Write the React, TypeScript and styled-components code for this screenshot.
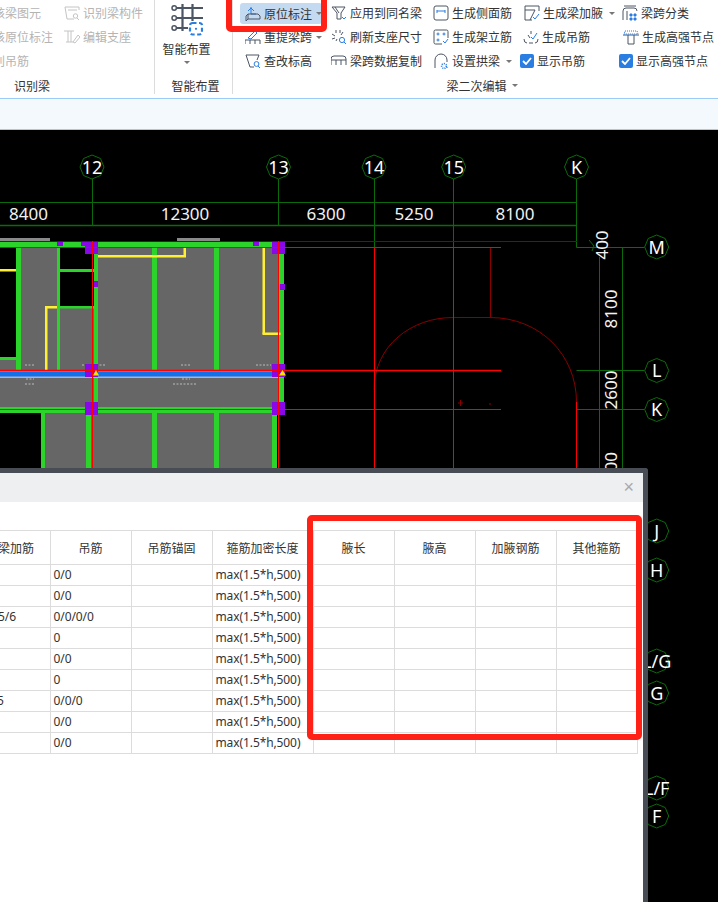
import React from 'react';
import styled, { createGlobalStyle } from 'styled-components';

const CJK = '"Noto Sans CJK SC", "Noto Sans", sans-serif';
const GREEN = '#0b6b0b';
const WALL = '#2bd32b';
const SLATE = '#4c5563';
const BLUE = '#2a7de1';

const GlobalStyle = createGlobalStyle`
  html, body {
    margin: 0;
    padding: 0;
    background: #fff;
  }
`;

const Page = styled.div`
  position: relative;
  width: 718px;
  height: 902px;
  overflow: hidden;
  font-family: ${CJK};
  font-size: 12px;
  color: #333;
`;

const Ribbon = styled.div`
  display: flex;
  height: 98px;
  overflow: hidden;
  background: #fff;
  box-sizing: border-box;
`;

const Group = styled.div<{ $width: number; $shift?: number; $last?: boolean }>`
  flex: none;
  width: ${(p) => p.$width}px;
  margin-left: ${(p) => p.$shift ?? 0}px;
  height: 94px;
  box-sizing: border-box;
  border-right: ${(p) => (p.$last ? 'none' : '1px solid #dcdcdc')};
`;

const Rows = styled.div<{ $columns: string; $pad?: number }>`
  display: grid;
  grid-template-columns: ${(p) => p.$columns};
  grid-auto-rows: 24px;
  height: 72px;
  padding: 1px 0 0 ${(p) => p.$pad ?? 0}px;
`;

const Item = styled.div<{ $off?: boolean; $indent?: number }>`
  display: flex;
  align-items: center;
  gap: 3px;
  padding-left: ${(p) => p.$indent ?? 0}px;
  white-space: nowrap;
  line-height: 16px;
  color: ${(p) => (p.$off ? '#b4b4b4' : '#333')};
`;

const ActiveItem = styled(Item)`
  width: 82px;
  height: 21px;
  margin: 2px 0 0;
  padding-left: 5px;
  box-sizing: border-box;
  background: #c3daf0;
  border-radius: 3px;
`;

const Caret = styled.span<{ $gap?: number }>`
  display: inline-block;
  margin-left: ${(p) => p.$gap ?? 1}px;
  border-style: solid;
  border-width: 3px 3px 0;
  border-color: #777 transparent transparent;
`;

const GroupLabel = styled.div<{ $left?: number; $center?: boolean }>`
  display: flex;
  align-items: center;
  justify-content: ${(p) => (p.$center ? 'center' : 'flex-start')};
  height: 20px;
  margin-top: 2px;
  padding-left: ${(p) => p.$left ?? 0}px;
  gap: 4px;
  white-space: nowrap;
`;

const BigTool = styled.div`
  display: flex;
  flex-direction: column;
  align-items: center;
  height: 73px;
  padding: 3px 14px 0 0;
  box-sizing: border-box;
  line-height: 16px;
`;

const BigToolText = styled.div`
  margin-top: 5px;
  height: 17px;
`;

const BigToolCaret = styled(Caret)`
  margin: 3px 0 0;
`;

const CheckBox = styled.span`
  display: flex;
  align-items: center;
  justify-content: center;
  flex: none;
  width: 14px;
  height: 14px;
  border-radius: 2px;
  background: ${BLUE};
`;

const Strip = styled.div`
  height: 30px;
  background: #f3f9fd;
  border-top: 1px solid #9ccbf7;
  border-bottom: 1px solid #9ccbf7;
`;

const Canvas = styled.div`
  position: relative;
  height: 772px;
  background: #000;
  overflow: hidden;
`;

const Drawing = styled.svg`
  display: block;
`;

const Dialog = styled.div`
  position: absolute;
  left: 0;
  top: 338px;
  bottom: 0;
  width: 648px;
  box-sizing: border-box;
  background: #fff;
  border-top: 5px solid #474c55;
  border-right: 5px solid #474c55;
  border-top-right-radius: 3px;
  overflow: hidden;
`;

const DialogTitle = styled.div`
  display: flex;
  align-items: center;
  justify-content: flex-end;
  height: 29px;
  padding-right: 9px;
  background: #eeeff1;
  color: #a8a8a8;
  font-family: "Liberation Sans", sans-serif;
  font-size: 18px;
`;

const Table = styled.table`
  margin: 28px 0 0 -1px;
  width: 638px;
  table-layout: fixed;
  border-collapse: collapse;
  font-size: 12px;
  color: #333;
`;

const Head = styled.th`
  height: 33px;
  padding: 0;
  font-weight: 400;
  text-align: center;
  white-space: nowrap;
  overflow: hidden;
  border: 1px solid #dcdcdc;
  border-left: none;

  &:first-child {
    text-align: left;
    text-indent: -1px;
  }
`;

const Cell = styled.td<{ $indent?: number }>`
  height: 20px;
  padding: 0 0 0 3px;
  font-family: "Noto Sans", sans-serif;
  letter-spacing: -0.1px;
  line-height: 20px;
  white-space: nowrap;
  overflow: hidden;
  border: 1px solid #dcdcdc;
  border-left: none;

  &:first-child {
    padding-left: 0;
    text-indent: ${(p) => p.$indent ?? 0}px;
  }
`;

const Highlight = styled.div`
  position: absolute;
  box-sizing: border-box;
  border: 6px solid #ff2016;
  border-radius: 5px;
  pointer-events: none;
`;

const ToolHighlight = styled(Highlight)`
  left: 226px;
  top: -8px;
  width: 101px;
  height: 40px;
`;

const TableHighlight = styled(Highlight)`
  left: 307px;
  top: 42px;
  width: 335px;
  height: 225px;
`;

const Ico = ({ children }: { children: React.ReactNode }) => (
  <svg width="16" height="16" viewBox="0 0 16 16" fill="none" stroke={SLATE} strokeWidth="1" style={{ flex: 'none' }}>
    {children}
  </svg>
);

const ico: Record<string, React.ReactNode> = {
  recognize: (
    <g stroke="#c4c4c4">
      <path d="M1 2h14v3M1 2l2 12h7M4 5h9" />
      <circle cx="11.5" cy="11" r="2.2" />
      <path d="M13 13l2 2" />
    </g>
  ),
  support: (
    <g stroke="#c4c4c4">
      <path d="M0 2h10M4 2v11M7 2v11M2 13h7" />
      <path d="M9 13l5-7 2 2-5 6z" />
    </g>
  ),
  inplace: (
    <>
      <path d="M6 1v7h5" stroke={BLUE} />
      <path d="M3 5l3-3 3 3" stroke={BLUE} />
      <path d="M1 15v-5l2-2h10l2 2v3H3l-2 2zM3 8v5" />
    </>
  ),
  respan: (
    <>
      <path d="M3 9l7-7 2 2-6 6z" stroke={BLUE} />
      <path d="M0 15v-4h15v4M5 11v4M10 11v4" />
    </>
  ),
  level: (
    <>
      <path d="M1 2h13l-2 5M1 2l4 12h4" />
      <circle cx="11.5" cy="11" r="2.4" stroke={BLUE} />
      <path d="M13 13l2 2" stroke={BLUE} />
    </>
  ),
  apply: (
    <>
      <path d="M1 2h13l-4 6v6H6V8z" />
      <path d="M4 2l4 6" />
      <path d="M11 12l2 2 2-2" stroke={BLUE} />
    </>
  ),
  refresh: (
    <>
      <path d="M5 1v3M9 1v3M1 5l3 2M1 10l3-1M12 3l-2 3M5 12l1-2" />
      <circle cx="11" cy="11" r="2.6" stroke={BLUE} />
      <path d="M13 13l2 2" stroke={BLUE} />
    </>
  ),
  copy: (
    <>
      <path d="M0 12V6q0-3 3-3h9q3 0 3 3v6" />
      <path d="M0 7h15M5 7v5M10 7v5" />
    </>
  ),
  side: (
    <>
      <rect x="1" y="1" width="14" height="14" rx="2" />
      <path d="M4 8V6h8v2M4 6V5M12 6V5" stroke={BLUE} />
    </>
  ),
  erect: (
    <>
      <path d="M9 15H2.5Q1 15 1 13.5v-11Q1 1 2.5 1h11Q15 1 15 2.500V9" />
      <circle cx="5" cy="5" r="1" stroke={BLUE} />
      <circle cx="11" cy="5" r="1" stroke={BLUE} />
      <circle cx="5" cy="11" r="1" stroke={BLUE} />
      <path d="M10 12l2 2 3-4" stroke={BLUE} />
    </>
  ),
  arch: (
    <>
      <path d="M2 15V7a6 6 0 0 1 12 0v2M14 15v-1" />
      <circle cx="11" cy="13" r="2.400" stroke={BLUE} strokeDasharray="1 1" strokeWidth="1.600" />
    </>
  ),
  haunch: (
    <>
      <path d="M8 15H1V1h14v5M1 5h10L6 15" />
      <path d="M9 12l2 2 4-5" stroke={BLUE} />
    </>
  ),
  hanger: (
    <>
      <path d="M1 10q0 4 3 4M15 10q0 4-3 4M6 14h4" />
      <path d="M5 6l2 3M8 2v3" />
      <path d="M8 8l2 2 4-6" stroke={BLUE} />
    </>
  ),
  classify: (
    <>
      <path d="M2 1h12" />
      <path d="M1 15V6q0-3 3-3h8q3 0 3 3" />
      <path d="M5 6v9" />
      <path d="M8 9h2v2H8zM12 9h2v2h-2zM8 13h2v2H8zM12 13h2v2h-2z" stroke={BLUE} fill={BLUE} />
    </>
  ),
  strong: (
    <>
      <path d="M0 6h16M3 6v0M5 6v9h6V6" />
      <path d="M2 2h12l1 3H1z" stroke={BLUE} strokeDasharray="1 1" />
    </>
  ),
};

const Check = () => (
  <CheckBox>
    <svg width="10" height="8" viewBox="0 0 10 8" fill="none" stroke="#fff" strokeWidth="1.800">
      <path d="M1 4l3 3 5-6" />
    </svg>
  </CheckBox>
);

const SmartIcon = () => (
  <svg width="32" height="33" viewBox="0 0 32 33" fill="none">
    <path d="M11.500 1v27M21.500 1v17M6 5h26M6 15h26M6 25h11" stroke={SLATE} strokeWidth="2.200" />
    <circle cx="3.200" cy="5" r="2.200" stroke={SLATE} strokeWidth="1.500" />
    <circle cx="3.200" cy="15" r="2.200" stroke={SLATE} strokeWidth="1.500" />
    <circle cx="3.200" cy="25" r="2.200" stroke={SLATE} strokeWidth="1.500" />
    <rect x="19" y="20" width="12" height="11.500" rx="2.500" stroke={BLUE} strokeWidth="2.200" strokeDasharray="4 2.500" />
    <circle cx="25" cy="25.800" r="1.100" fill={BLUE} />
  </svg>
);

// grid axis bubble, drawn as the low-res octagon the CAD view shows
const Bubble = ({ x, y, label }: { x: number; y: number; label: string }) => {
  const pts = Array.from({ length: 8 }, (_, i) => {
    const a = (i * Math.PI) / 4;
    return `${(x + 12 * Math.cos(a)).toFixed(1)},${(y + 12 * Math.sin(a)).toFixed(1)}`;
  }).join(' ');
  return (
    <g>
      <polygon points={pts} fill="#000" stroke={GREEN} />
      <text x={x} y={y + 6.5} fontSize="18" fill="#fff" textAnchor="middle" fontFamily='"Noto Sans", sans-serif'>
        {label}
      </text>
    </g>
  );
};

const Dim = ({ x, y, label }: { x: number; y: number; label: string }) => (
  <text x={x} y={y} fontSize="17" fill="#f2f2f2" textAnchor="middle" fontFamily='"Noto Sans", sans-serif'>
    {label}
  </text>
);

const VDim = ({ x, y, label }: { x: number; y: number; label: string }) => (
  <text
    transform={`translate(${x} ${y}) rotate(-90)`}
    fontSize="17"
    fill="#f2f2f2"
    textAnchor="middle"
    fontFamily='"Noto Sans", sans-serif'
  >
    {label}
  </text>
);

const grays = [
  [0, 238, 50, 3, '#8a8a8a'],
  [177, 238, 43, 3, '#8a8a8a'],
  [21, 247, 36, 124, '#666'],
  [0, 357, 21, 14, '#666'],
  [60, 308, 35, 63, '#666'],
  [98, 247, 181, 124, '#666'],
  [0, 377, 280, 32, '#666'],
  [45, 412, 230, 56, '#666'],
] as const;

const walls = [
  [0, 242, 284, 5],
  [16, 247, 5, 124],
  [0, 357, 17, 3],
  [57, 247, 3, 124],
  [60, 269, 34, 3],
  [60, 306, 34, 2.500],
  [94, 247, 4, 125],
  [152, 247, 5, 124],
  [214, 247, 5, 124],
  [279, 247, 5, 161],
  [94, 377, 4, 32],
  [0, 407, 284, 6],
  [41, 413, 4, 55],
  [86, 413, 5, 55],
  [152, 413, 5, 55],
  [214, 413, 5, 55],
  [272, 413, 5, 55],
];

const yellows = [
  [0, 269, 16, 2.500],
  [45, 306, 2.500, 65],
  [45, 306, 12, 2.500],
  [98, 255, 88, 2.500],
  [183.500, 247, 2.500, 10],
  [262.500, 247, 2.500, 87],
  [262.500, 332.500, 18, 2.500],
];

const purples = [
  [57, 242, 6, 4],
  [81, 242, 4, 4],
  [253, 242, 6, 4],
  [85, 242, 13, 12],
  [272, 242, 13, 12],
  [94, 281, 4, 6],
  [280, 284, 5, 6],
  [85, 364, 13, 13],
  [272, 364, 13, 13],
  [85, 402, 13, 13],
  [272, 402, 13, 13],
];

const specks = [
  [25, 365, 10],
  [82, 365, 24],
  [181, 365, 9],
  [256, 365, 15],
  [26, 379, 8],
  [25, 384, 10],
  [182, 379, 8],
  [173, 384, 24],
];

const bubbles = [
  [92, 167, '12'],
  [278.500, 167, '13'],
  [374, 167, '14'],
  [453.700, 167, '15'],
  [576.500, 167, 'K'],
  [656.700, 247, 'M'],
  [656.700, 370.500, 'L'],
  [656.700, 409.500, 'K'],
  [656.700, 531, 'J'],
  [656.700, 570, 'H'],
  [656.700, 661, 'L/G'],
  [656.700, 693, 'G'],
  [656.700, 788, 'L/F'],
  [656.700, 816, 'F'],
] as const;

const PlanDrawing = () => (
  <Drawing width="718" height="772" viewBox="0 130 718 772">
    {grays.map(([x, y, w, h, c], i) => (
      <rect key={i} x={x} y={y} width={w} height={h} fill={c} />
    ))}
    {walls.map(([x, y, w, h], i) => (
      <rect key={i} x={x} y={y} width={w} height={h} fill={WALL} />
    ))}
    {yellows.map(([x, y, w, h], i) => (
      <rect key={i} x={x} y={y} width={w} height={h} fill="#ffef33" />
    ))}
    <rect x="0" y="370" width="280" height="8" fill="#a5b4d6" />
    <rect x="0" y="371.500" width="280" height="5" fill="#1470e8" />
    {specks.map(([x, y, w], i) => (
      <path key={i} d={`M${x} ${y}h${w}`} stroke="#bbb" strokeDasharray="2 1.500" />
    ))}
    {purples.map(([x, y, w, h], i) => (
      <rect key={i} x={x} y={y} width={w} height={h} fill="#8a08e8" />
    ))}

    <g fill="none" stroke={GREEN}>
      <path d="M0 202.500h577" />
      <path d="M92.500 179v46M278.500 179v46M374.500 179v68M453.500 179v68M576.500 179v68.500h68" />
      <path d="M576.500 370.500h68M576.500 409.500h68M599.500 257v213M622.500 247v223" />
      <path d="M589 240l5 6-2 5" />
    </g>
    <path d="M0 225.500h577" stroke={GREEN} strokeWidth="1.500" />

    <g fill="none" stroke="#8a0000">
      <path d="M0 241.500h577M490.500 247v70" />
      <path d="M374 390C374 345 412 317.500 453 317.500H490C540 317.500 576.500 355 576.500 402" />
      <path d="M460.500 400v6M458 403h5M489 404h2" />
    </g>
    <g fill="none" stroke="#ff0000">
      <path d="M0 247.500h501M0 409.500h501" />
      <path d="M92.500 241v227M278.500 241v227M374.500 247v221M453.500 247v221M576.500 402v66" />
    </g>
    <path d="M0 370.500h501" stroke="#ff0000" strokeWidth="1.500" />
    <path d="M96 370l3 5.500h-6zM282.500 370l3.500 5.500h-7z" fill="#ffe000" />

    <Dim x={28.500} y={220} label="8400" />
    <Dim x={185} y={220} label="12300" />
    <Dim x={326} y={220} label="6300" />
    <Dim x={414} y={220} label="5250" />
    <Dim x={515} y={220} label="8100" />
    <VDim x={607.500} y={245} label="400" />
    <VDim x={617} y={309} label="8100" />
    <VDim x={617} y={390} label="2600" />
    <VDim x={617} y={471.500} label="3000" />

    {bubbles.map(([x, y, label]) => (
      <Bubble key={`${label}${y}`} x={x} y={y} label={label} />
    ))}
  </Drawing>
);

const heads = ['梁加筋', '吊筋', '吊筋锚固', '箍筋加密长度', '腋长', '腋高', '加腋钢筋', '其他箍筋'];
const widths = [51, 81, 81, 101, 81, 81, 81, 81];
const tableRows: { first?: [string, number]; hanger: string }[] = [
  { hanger: '0/0' },
  { hanger: '0/0' },
  { first: ['5/6', -1], hanger: '0/0/0/0' },
  { hanger: '0' },
  { hanger: '0/0' },
  { hanger: '0' },
  { first: ['5', -2], hanger: '0/0/0' },
  { hanger: '0/0' },
  { hanger: '0/0' },
];

export default function App() {
  return (
    <Page>
      <GlobalStyle />
      <Ribbon>
        <Group $width={174} $shift={-19}>
          <Rows $columns="83px 1fr">
            <Item $off>校核梁图元</Item>
            <Item $off><Ico>{ico.recognize}</Ico>识别梁构件</Item>
            <Item $off>校核原位标注</Item>
            <Item $off><Ico>{ico.support}</Ico>编辑支座</Item>
            <Item $off>识别吊筋</Item>
          </Rows>
          <GroupLabel $left={33}>识别梁</GroupLabel>
        </Group>
        <Group $width={78}>
          <BigTool>
            <SmartIcon />
            <BigToolText>智能布置</BigToolText>
            <BigToolCaret />
          </BigTool>
          <GroupLabel $center $left={4}>智能布置</GroupLabel>
        </Group>
        <Group $width={484} $last>
          <Rows $columns="91px 102px 87px 99px 99px" $pad={7}>
            <ActiveItem><Ico>{ico.inplace}</Ico>原位标注<Caret /></ActiveItem>
            <Item><Ico>{ico.apply}</Ico>应用到同名梁</Item>
            <Item><Ico>{ico.side}</Ico>生成侧面筋</Item>
            <Item $indent={4}><Ico>{ico.haunch}</Ico>生成梁加腋<Caret $gap={3} /></Item>
            <Item $indent={3}><Ico>{ico.classify}</Ico>梁跨分类</Item>

            <Item $indent={5}><Ico>{ico.respan}</Ico>重提梁跨<Caret /></Item>
            <Item><Ico>{ico.refresh}</Ico>刷新支座尺寸</Item>
            <Item><Ico>{ico.erect}</Ico>生成架立筋</Item>
            <Item $indent={3}><Ico>{ico.hanger}</Ico>生成吊筋</Item>
            <Item $indent={4}><Ico>{ico.strong}</Ico>生成高强节点</Item>

            <Item $indent={5}><Ico>{ico.level}</Ico>查改标高</Item>
            <Item><Ico>{ico.copy}</Ico>梁跨数据复制</Item>
            <Item><Ico>{ico.arch}</Ico>设置拱梁<Caret $gap={3} /></Item>
            <Item><Check />显示吊筋</Item>
            <Item><Check />显示高强节点</Item>
          </Rows>
          <GroupLabel $center $left={14}>梁二次编辑<Caret $gap={1} /></GroupLabel>
        </Group>
      </Ribbon>
      <Strip />
      <Canvas>
        <PlanDrawing />
        <Dialog>
          <DialogTitle>×</DialogTitle>
          <Table>
            <colgroup>
              {widths.map((w, i) => (
                <col key={i} width={w} />
              ))}
            </colgroup>
            <thead>
              <tr>
                {heads.map((h) => (
                  <Head key={h}>{h}</Head>
                ))}
              </tr>
            </thead>
            <tbody>
              {tableRows.map((row, i) => (
                <tr key={i}>
                  <Cell $indent={row.first?.[1]}>{row.first?.[0]}</Cell>
                  <Cell>{row.hanger}</Cell>
                  <Cell />
                  <Cell>max(1.5*h,500)</Cell>
                  <Cell />
                  <Cell />
                  <Cell />
                  <Cell />
                </tr>
              ))}
            </tbody>
          </Table>
          <TableHighlight />
        </Dialog>
      </Canvas>
      <ToolHighlight />
    </Page>
  );
}
